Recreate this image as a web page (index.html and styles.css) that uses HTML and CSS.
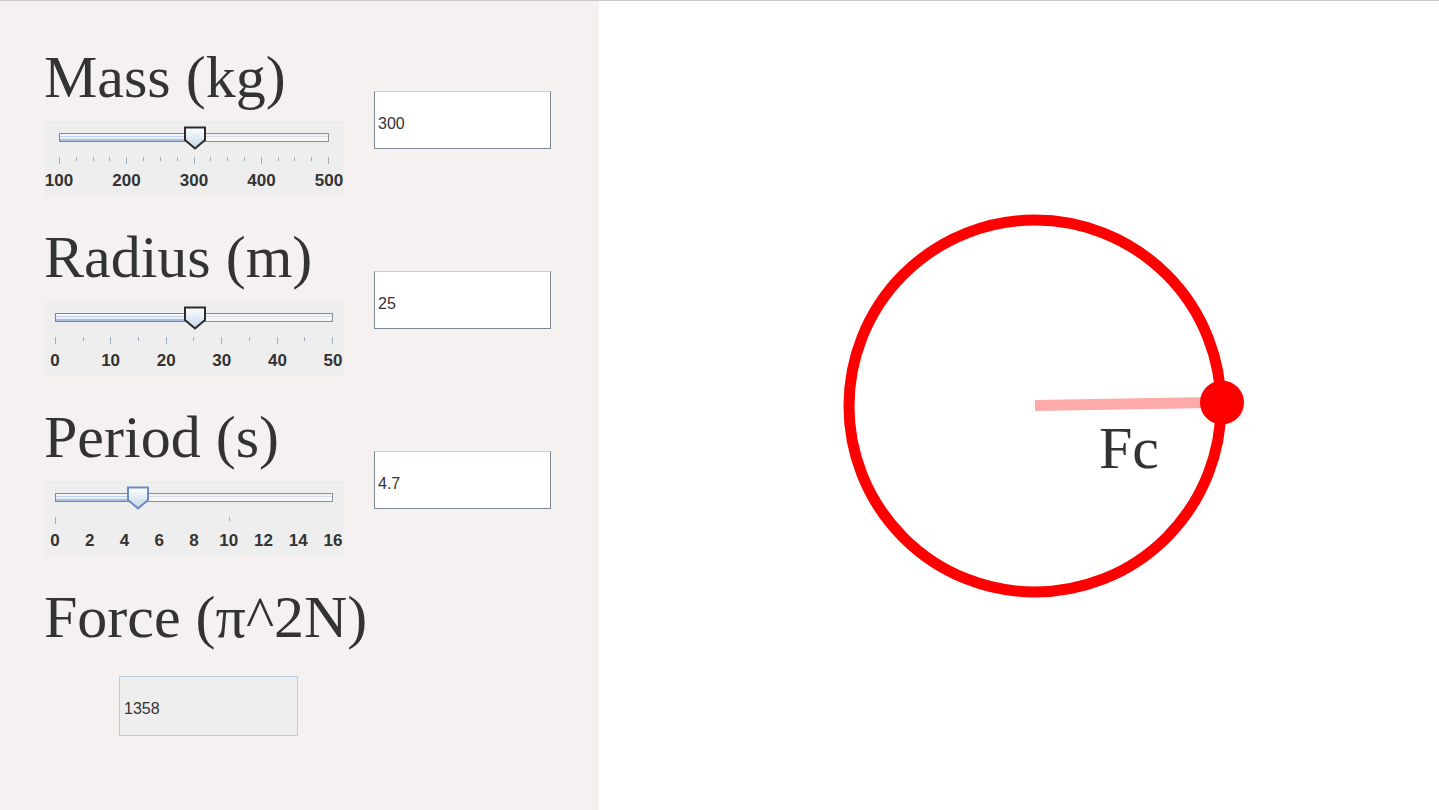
FILE: index.html
```html
<!DOCTYPE html>
<html>
<head>
<meta charset="utf-8">
<link rel="stylesheet" href="styles.css">
</head>
<body>
<div class="app">
  <div class="controls">
    <div class="group">
      <div class="left">
        <div class="title">Mass (kg)</div>
        <div class="slider wide">
          <div class="rail">
            <div class="track"><div class="fill" style="width:50%"></div></div>
            <div class="thumb" style="left:50%"><svg width="23" height="24" viewBox="0 0 23 24"><defs><linearGradient id="g1" x1="0" y1="0" x2="0" y2="1"><stop offset="0" stop-color="#ffffff"/><stop offset="1" stop-color="#c4d5ec"/></linearGradient></defs><path d="M1.5 1.5 H21.5 V14 L11.5 22.5 L1.5 14 Z" fill="url(#g1)" stroke="#2b2b2b" stroke-width="2" stroke-linejoin="miter"/></svg></div>
          </div>
          <div class="ticks">
            <i class="mj"></i><i></i><i></i><i></i><i class="mj"></i><i></i><i></i><i></i><i class="mj"></i><i></i><i></i><i></i><i class="mj"></i><i></i><i></i><i></i><i class="mj"></i>
          </div>
          <div class="labels"><span><b>100</b></span><span><b>200</b></span><span><b>300</b></span><span><b>400</b></span><span><b>500</b></span></div>
        </div>
      </div>
      <div class="field">300</div>
    </div>

    <div class="group">
      <div class="left">
        <div class="title">Radius (m)</div>
        <div class="slider">
          <div class="rail">
            <div class="track"><div class="fill" style="width:50%"></div></div>
            <div class="thumb" style="left:50%"><svg width="23" height="24" viewBox="0 0 23 24"><defs><linearGradient id="g2" x1="0" y1="0" x2="0" y2="1"><stop offset="0" stop-color="#ffffff"/><stop offset="1" stop-color="#c4d5ec"/></linearGradient></defs><path d="M1.5 1.5 H21.5 V14 L11.5 22.5 L1.5 14 Z" fill="url(#g2)" stroke="#2b2b2b" stroke-width="2"/></svg></div>
          </div>
          <div class="ticks">
            <i class="mj"></i><i></i><i class="mj"></i><i></i><i class="mj"></i><i></i><i class="mj"></i><i></i><i class="mj"></i><i></i><i class="mj"></i>
          </div>
          <div class="labels"><span><b>0</b></span><span><b>10</b></span><span><b>20</b></span><span><b>30</b></span><span><b>40</b></span><span><b>50</b></span></div>
        </div>
      </div>
      <div class="field">25</div>
    </div>

    <div class="group">
      <div class="left">
        <div class="title">Period (s)</div>
        <div class="slider">
          <div class="rail">
            <div class="track"><div class="fill" style="width:29.4%"></div></div>
            <div class="thumb" style="left:29.4%"><svg width="23" height="24" viewBox="0 0 23 24"><defs><linearGradient id="g3" x1="0" y1="0" x2="0" y2="1"><stop offset="0" stop-color="#ffffff"/><stop offset="1" stop-color="#c4d5ec"/></linearGradient></defs><path d="M1.5 1.5 H21.5 V14 L11.5 22.5 L1.5 14 Z" fill="url(#g3)" stroke="#6a8ac6" stroke-width="2"/></svg></div>
          </div>
          <div class="ticks">
            <i class="mj"></i><b class="gap" style="flex-grow:10"></b><i></i><b class="gap" style="flex-grow:6"></b>
          </div>
          <div class="labels"><span><b>0</b></span><span><b>2</b></span><span><b>4</b></span><span><b>6</b></span><span><b>8</b></span><span><b>10</b></span><span><b>12</b></span><span><b>14</b></span><span><b>16</b></span></div>
        </div>
      </div>
      <div class="field">4.7</div>
    </div>

    <div class="result">
      <div class="title">Force (π^2N)</div>
      <div class="field out">1358</div>
    </div>
  </div>

  <div class="stage">
    <svg class="scene" width="840" height="809" viewBox="0 0 840 809">
      <circle cx="436" cy="405" r="186" fill="none" stroke="#ff0000" stroke-width="11"/>
      <line x1="436" y1="404.5" x2="612" y2="401.5" stroke="#ffaaaa" stroke-width="11"/>
      <circle cx="623" cy="401.5" r="22" fill="#ff0000"/>
      <text x="500" y="467" class="fc">Fc</text>
    </svg>
  </div>
</div>
</body>
</html>
```

FILE: styles.css
```css
html, body {
  margin: 0;
  padding: 0;
  background: #ffffff;
}
.app {
  width: 1439px;
  height: 810px;
  border-top: 1px solid #c8c8c8;
  box-sizing: border-box;
  display: flex;
  overflow: hidden;
}
.controls {
  width: 599px;
  flex: none;
  background: #f5f1f0;
  padding: 46px 0 0 44px;
  box-sizing: border-box;
}
.group {
  display: flex;
  align-items: flex-start;
  column-gap: 30px;
  height: 180px;
}
.left {
  display: flex;
  flex-direction: column;
}
.title {
  font-family: "Liberation Serif", "Times New Roman", serif;
  font-size: 60px;
  line-height: 60px;
  height: 60px;
  color: #333333;
  white-space: nowrap;
  margin-bottom: 14px;
}
.slider {
  width: 300px;
  height: 75px;
  background: #eeeeee;
  padding: 12px 11px 0 11px;
  box-sizing: border-box;
}
.slider.wide {
  padding: 12px 15px 0 15px;
}
.rail {
  position: relative;
  height: 9px;
}
.track {
  height: 9px;
  box-sizing: border-box;
  border: 1px solid #8a919c;
  background: linear-gradient(#f2f2f2 0, #f2f2f2 25%, #d8dde4 25%, #d8dde4 45%, #f6f6f6 45%, #f6f6f6 100%);
  position: relative;
}
.fill {
  position: absolute;
  left: -1px;
  top: -1px;
  height: 9px;
  box-sizing: border-box;
  border: 1px solid #6f87be;
  border-right: none;
  background: linear-gradient(#f4f7fc 0, #f4f7fc 25%, #c2d2ea 25%, #c2d2ea 45%, #e8eef8 45%, #e8eef8 70%, #aabddf 70%);
}
.thumb {
  position: absolute;
  top: -7px;
  width: 23px;
  height: 24px;
  transform: translateX(-50%);
  margin-left: 1px;
}
.thumb svg {
  display: block;
}
.ticks {
  display: flex;
  justify-content: space-between;
  align-items: flex-start;
  height: 7px;
  margin-top: 15px;
}
.ticks i {
  display: block;
  width: 1px;
  height: 4px;
  background: #9db0c8;
}
.ticks i.mj {
  height: 7px;
}
.ticks .gap {
  display: block;
  height: 1px;
  flex-basis: 0;
}
.labels {
  display: flex;
  justify-content: space-between;
  margin-top: 7px;
  height: 20px;
}
.labels span {
  width: 0;
  display: flex;
  justify-content: center;
}
.labels b {
  font-family: "Liberation Sans", Arial, sans-serif;
  font-weight: bold;
  font-size: 17px;
  line-height: 20px;
  color: #333333;
  white-space: nowrap;
}
.field {
  margin-top: 44px;
  width: 177px;
  height: 58px;
  box-sizing: border-box;
  background: #ffffff;
  border: 1px solid #7d8894;
  border-top-color: #c9ced4;
  padding: 7px 0 0 3px;
  display: flex;
  align-items: center;
  font-family: "Liberation Sans", Arial, sans-serif;
  font-size: 16px;
  color: #333333;
}
.result {
  display: flex;
  flex-direction: column;
}
.result .title {
  margin-bottom: 29px;
}
.field.out {
  margin: 0 0 0 75px;
  width: 179px;
  height: 60px;
  background: #eeeeee;
  border: 1px solid #b8cde6;
  padding: 6px 0 0 4px;
}
.stage {
  flex: 1;
  background: #ffffff;
}
.scene {
  display: block;
}
.fc {
  font-family: "Liberation Serif", "Times New Roman", serif;
  font-size: 60px;
  fill: #333333;
}
```
